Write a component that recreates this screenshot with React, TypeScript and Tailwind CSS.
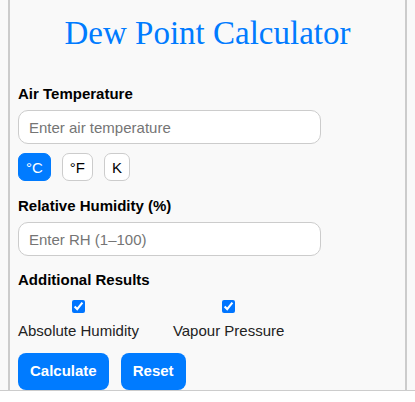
import { useState } from 'react';

const units = ['°C', '°F', 'K'];

export default function App() {
  const [unit, setUnit] = useState('°C');
  const [absHumidity, setAbsHumidity] = useState(true);
  const [vapour, setVapour] = useState(true);

  return (
    <div className="h-[391px] overflow-hidden border-b border-[#cccccc] bg-[#f9f9f9] font-['Liberation_Sans',Arial,sans-serif] text-[15px] text-black">
      <div className="mx-2 min-h-full border-x-2 border-[#cccccc] px-2 pt-4">
        <h1 className="text-center font-['Liberation_Serif','Times_New_Roman',serif] text-[33px] leading-[35px] font-normal text-[#007bff]">
          Dew Point Calculator
        </h1>

        {/* Air temperature */}
        <label className="mt-[34px] block font-bold leading-[17px]">Air Temperature</label>
        <input
          type="text"
          placeholder="Enter air temperature"
          className="mt-2 block h-[34px] w-[303px] rounded-[10px] border border-[#cccccc] bg-white px-[10px] text-[15px] placeholder:text-[#757575] focus:outline-none"
        />
        <div className="mt-[9px] flex gap-[11px]">
          {units.map(u => (
            <button
              key={u}
              onClick={() => setUnit(u)}
              className={`h-[28px] rounded-[7px] border px-[7px] text-[15px] leading-[17px] ${
                unit === u ? 'border-[#007bff] bg-[#007bff] text-white' : 'border-[#cccccc] bg-white text-black'
              }`}
            >
              {u}
            </button>
          ))}
        </div>

        {/* Relative humidity */}
        <label className="mt-4 block font-bold leading-[17px]">Relative Humidity (%)</label>
        <input
          type="text"
          placeholder="Enter RH (1–100)"
          className="mt-2 block h-[34px] w-[303px] rounded-[10px] border border-[#cccccc] bg-white px-[10px] text-[15px] placeholder:text-[#757575] focus:outline-none"
        />

        {/* Additional results */}
        <div className="mt-[15px] font-bold leading-[17px]">Additional Results</div>
        <div className="mt-3 flex gap-[34px]">
          <label className="flex flex-col items-center">
            <input
              type="checkbox"
              checked={absHumidity}
              onChange={e => setAbsHumidity(e.target.checked)}
              className="h-[13px] w-[13px] accent-[#0075ff]"
            />
            <span className="mt-[9px] leading-[17px] text-[#222]">Absolute Humidity</span>
          </label>
          <label className="flex flex-col items-center">
            <input
              type="checkbox"
              checked={vapour}
              onChange={e => setVapour(e.target.checked)}
              className="h-[13px] w-[13px] accent-[#0075ff]"
            />
            <span className="mt-[9px] leading-[17px] text-[#222]">Vapour Pressure</span>
          </label>
        </div>

        <div className="mt-[14px] flex gap-3">
          <button className="h-[37px] rounded-[8px] bg-[#007bff] px-3 text-[15px] font-bold text-white">Calculate</button>
          <button className="h-[37px] rounded-[8px] bg-[#007bff] px-3 text-[15px] font-bold text-white">Reset</button>
        </div>
      </div>
    </div>
  );
}
